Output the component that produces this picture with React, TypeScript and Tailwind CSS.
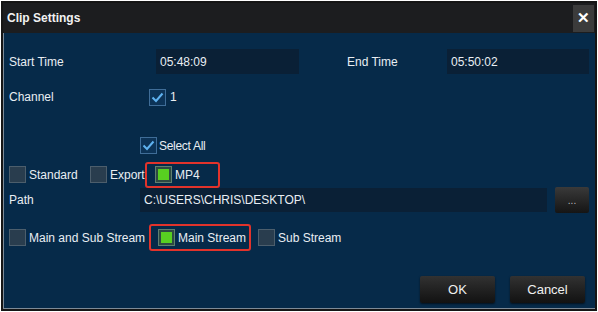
import React from "react";

const font = { fontFamily: '"Liberation Sans", Arial, sans-serif' };

function Box({ kind }: { kind: "off" | "blue" | "green" }) {
  if (kind === "blue") {
    return (
      <span className="flex h-[17px] w-[17px] shrink-0 items-center justify-center border border-[#3f6d98] bg-[#0c3357]">
        <svg width="13" height="11" viewBox="0 0 13 11">
          <path d="M1.5 5.5 L5 9 L11.5 1.5" fill="none" stroke="#5fb2f0" strokeWidth="2" />
        </svg>
      </span>
    );
  }
  if (kind === "green") {
    return (
      <span className="flex h-[17px] w-[17px] shrink-0 items-center justify-center border border-[#5f7f70] bg-[#2d4a42]">
        <span className="h-[11px] w-[11px] bg-[#58d021]" />
      </span>
    );
  }
  return <span className="block h-[17px] w-[17px] shrink-0 border border-[#4c5e6c] bg-[#293d4e]" />;
}

function Btn({ label, w }: { label: string; w: string }) {
  return (
    <button
      className={`${w} h-[27px] rounded-[2px] bg-gradient-to-b from-[#323232] to-[#121212] text-[13px] text-[#f0f0f0] shadow-[0_1px_2px_rgba(0,0,0,0.6)]`}
    >
      {label}
    </button>
  );
}

export default function App() {
  return (
    <div className="h-[312px] w-[598px] bg-white p-px" style={font}>
      <div className="flex h-[310px] w-[596px] flex-col border-2 border-[#151515] bg-[#151515]">
        {/* Title bar */}
        <div className="flex h-[30px] shrink-0 items-center justify-between bg-[#1c1d1f] pl-[4px] pr-[1px]">
          <span className="text-[12px] font-bold text-[#f2f2f2]">Clip Settings</span>
          <span className="flex h-[27px] w-[21px] items-center justify-center bg-[#3b3b3b] text-[15px] font-bold text-white">
            ✕
          </span>
        </div>

        {/* Body */}
        <div className="flex flex-1 flex-col border-l border-b border-[#7d8a96] bg-[#062a49] pl-[5px] text-[12px] text-[#e9eef3]">
          {/* Time row */}
          <div className="mt-[16px] flex h-[25px] items-center">
            <span className="w-[147px]">Start Time</span>
            <div className="flex h-[25px] w-[143px] items-center bg-[#0a2036] pl-[4px]">05:48:09</div>
            <span className="ml-[48px] w-[100px]">End Time</span>
            <div className="flex h-[25px] w-[142px] items-center bg-[#0a2036] pl-[4px]">05:50:02</div>
          </div>

          {/* Channel */}
          <div className="mt-[14px] flex h-[18px] items-center">
            <span className="w-[140px]">Channel</span>
            <Box kind="blue" />
            <span className="ml-[4px]">1</span>
          </div>

          {/* Select All */}
          <div className="mt-[31px] flex h-[17px] items-center pl-[131px]">
            <Box kind="blue" />
            <span className="ml-[2px] tracking-[-0.3px]">Select All</span>
          </div>

          {/* Format */}
          <div className="mt-[8px] flex h-[25px] items-center">
            <Box kind="off" />
            <span className="ml-[3px] w-[61px]">Standard</span>
            <Box kind="off" />
            <span className="ml-[3px] w-[35px]">Export</span>
            <div className="flex h-[26px] w-[75px] items-center rounded-[3px] border-2 border-[#e2332b] pl-[8px]">
              <Box kind="green" />
              <span className="ml-[3px]">MP4</span>
            </div>
          </div>

          {/* Path */}
          <div className="flex h-[26px] items-center">
            <span className="w-[131px]">Path</span>
            <div className="flex h-[24px] w-[407px] items-center bg-[#0a2036] pl-[4px]">C:\USERS\CHRIS\DESKTOP\</div>
            <button className="ml-[8px] h-[26px] w-[34px] rounded-[2px] bg-gradient-to-b from-[#3a3a3a] to-[#151515] text-[10px] text-[#bbb]">
              ...
            </button>
          </div>

          {/* Stream */}
          <div className="mt-[11px] flex h-[27px] items-center">
            <Box kind="off" />
            <span className="ml-[3px] w-[120px]">Main and Sub Stream</span>
            <div className="flex h-[27px] w-[102px] items-center rounded-[3px] border-2 border-[#e2332b] pl-[7px]">
              <Box kind="green" />
              <span className="ml-[3px]">Main Stream</span>
            </div>
            <div className="ml-[7px] flex items-center">
              <Box kind="off" />
              <span className="ml-[3px]">Sub Stream</span>
            </div>
          </div>

          {/* Buttons */}
          <div className="mt-[25px] flex justify-end gap-[15px] pr-[10px]">
            <Btn label="OK" w="w-[75px]" />
            <Btn label="Cancel" w="w-[75px]" />
          </div>
        </div>
      </div>
    </div>
  );
}
